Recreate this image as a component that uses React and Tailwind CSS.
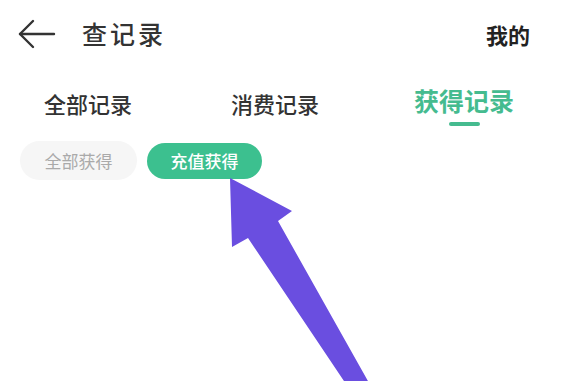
import React from 'react';

const FONT = { fontFamily: '"Noto Sans CJK SC", "Noto Sans", sans-serif' };

const BackIcon = () => (
  <svg width="38" height="30" viewBox="0 0 38 30" fill="none" stroke="#333" strokeWidth="2.4" strokeLinecap="round" strokeLinejoin="round">
    <path d="M2 15 H36" />
    <path d="M15 2 L2 15 L15 28" />
  </svg>
);

const tabs = [
  { label: '全部记录', width: 'w-[176px]' },
  { label: '消费记录', width: 'w-[198px]' },
  { label: '获得记录', width: 'w-[180px]', active: true },
];

export default function App() {
  return (
    <div className="relative w-[562px] h-[381px] overflow-hidden bg-white" style={FONT}>
      {/* header */}
      <div className="flex items-center h-[68px] pl-[18px] pr-[32px]">
        <BackIcon />
        <span className="ml-[26px] text-[25px] tracking-[3px] text-[#333] font-medium">查记录</span>
        <span className="ml-auto text-[22px] text-[#222] font-bold">我的</span>
      </div>

      {/* tabs */}
      <div className="flex h-[60px]">
        {tabs.map((t) => (
          <div key={t.label} className={`${t.width} flex flex-col items-center pt-[17px]`}>
            {t.active ? (
              <>
                <span className="text-[25px] leading-[30px] font-bold text-[#45bb8f]">{t.label}</span>
                <span className="mt-[7px] w-[31px] h-[4px] rounded-full bg-[#45bb8f]" />
              </>
            ) : (
              <span className="text-[22px] leading-[30px] mt-[3px] font-medium text-[#333]">{t.label}</span>
            )}
          </div>
        ))}
      </div>

      {/* sub filters */}
      <div className="flex items-center gap-[10px] pl-[20px] mt-[13px]">
        <div className="w-[117px] h-[39px] rounded-full bg-[#f6f6f6] flex items-center justify-center text-[17px] text-[#aaa]">
          全部获得
        </div>
        <div className="w-[115px] h-[36px] rounded-full bg-[#3cc08f] flex items-center justify-center text-[17px] text-white font-medium">
          充值获得
        </div>
      </div>

      {/* annotation arrow */}
      <svg className="absolute left-0 top-0" width="562" height="381" viewBox="0 0 562 381">
        <polygon
          points="230,178 292,211 278,221 373,390 350,390 248,238 232,247"
          fill="#6a4ee0"
        />
      </svg>
    </div>
  );
}
